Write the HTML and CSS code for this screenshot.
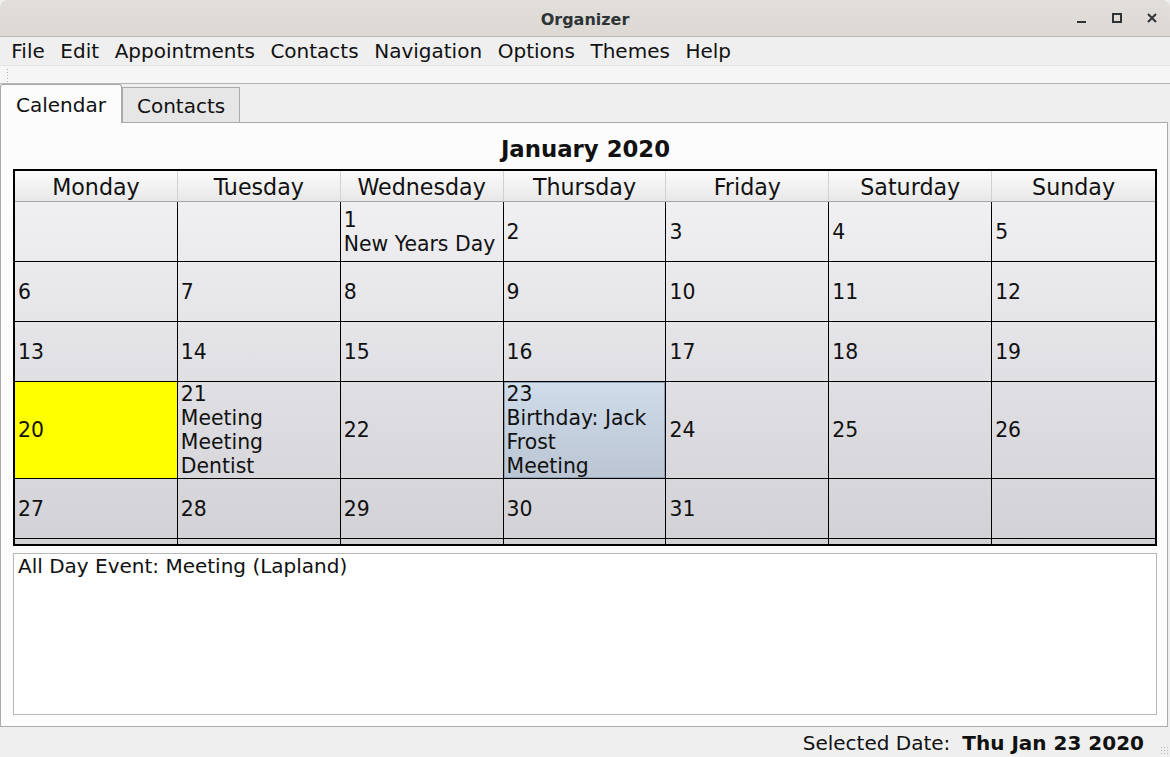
FILE: index.html
```html
<!DOCTYPE html>
<html>
<head>
<meta charset="utf-8">
<link rel="stylesheet" href="styles.css">
</head>
<body>
<div class="window">
  <div class="titlebar">
    <div class="title">Organizer</div>
    <div class="controls">
      <svg class="ctl" width="12" height="12" viewBox="0 0 12 12"><rect x="1" y="9" width="9" height="2" fill="#2e3436"/></svg>
      <svg class="ctl" width="12" height="12" viewBox="0 0 12 12"><rect x="2" y="2" width="8" height="8" fill="none" stroke="#2e3436" stroke-width="2"/></svg>
      <svg class="ctl" width="12" height="12" viewBox="0 0 12 12"><path d="M2 2 L10 10 M10 2 L2 10" stroke="#2e3436" stroke-width="2"/></svg>
    </div>
  </div>
  <div class="menubar">
    <span class="mi">File</span><span class="mi">Edit</span><span class="mi">Appointments</span><span class="mi">Contacts</span><span class="mi">Navigation</span><span class="mi">Options</span><span class="mi">Themes</span><span class="mi">Help</span>
  </div>
  <div class="toolbar"><div class="grip"></div></div>
  <div class="tabs">
    <div class="tab active">Calendar</div>
    <div class="tab">Contacts</div>
  </div>
  <div class="panel">
    <div class="heading">January 2020</div>
    <div class="cal">
      <div class="hd">Monday</div><div class="hd">Tuesday</div><div class="hd">Wednesday</div><div class="hd">Thursday</div><div class="hd">Friday</div><div class="hd">Saturday</div><div class="hd last">Sunday</div>

      <div class="c"></div><div class="c"></div><div class="c"><span>1</span><span>New Years Day</span></div><div class="c"><span>2</span></div><div class="c"><span>3</span></div><div class="c"><span>4</span></div><div class="c last"><span>5</span></div>

      <div class="c"><span>6</span></div><div class="c"><span>7</span></div><div class="c"><span>8</span></div><div class="c"><span>9</span></div><div class="c"><span>10</span></div><div class="c"><span>11</span></div><div class="c last"><span>12</span></div>

      <div class="c"><span>13</span></div><div class="c"><span>14</span></div><div class="c"><span>15</span></div><div class="c"><span>16</span></div><div class="c"><span>17</span></div><div class="c"><span>18</span></div><div class="c last"><span>19</span></div>

      <div class="c today"><span>20</span></div><div class="c"><span>21</span><span>Meeting</span><span>Meeting</span><span>Dentist</span></div><div class="c"><span>22</span></div><div class="c selected"><span>23</span><span>Birthday: Jack</span><span>Frost</span><span>Meeting</span></div><div class="c"><span>24</span></div><div class="c"><span>25</span></div><div class="c last"><span>26</span></div>

      <div class="c"><span>27</span></div><div class="c"><span>28</span></div><div class="c"><span>29</span></div><div class="c"><span>30</span></div><div class="c"><span>31</span></div><div class="c"></div><div class="c last"></div>

      <div class="c tail"></div><div class="c tail"></div><div class="c tail"></div><div class="c tail"></div><div class="c tail"></div><div class="c tail"></div><div class="c tail last"></div>
    </div>
    <div class="details">All Day Event: Meeting (Lapland)</div>
  </div>
  <div class="status">
    <span class="lbl">Selected Date:</span><span class="val">Thu Jan 23 2020</span>
    <div class="sgrip"></div>
  </div>
</div>
</body>
</html>
```

FILE: styles.css
```css
* { box-sizing: border-box; }
html, body {
  margin: 0;
  padding: 0;
  width: 1170px;
  height: 757px;
  overflow: hidden;
  background: #efefef;
  font-family: "DejaVu Sans", "Liberation Sans", sans-serif;
  font-size: 20px;
  color: #111;
}
.window {
  display: flex;
  flex-direction: column;
  width: 1170px;
  height: 757px;
}
.titlebar {
  height: 37px;
  flex: none;
  background: linear-gradient(#e2dfdb, #dcd8d3);
  border-bottom: 1px solid #bfb8b1;
  border-radius: 8px 8px 0 0;
  display: flex;
  align-items: center;
  justify-content: center;
  position: relative;
}
.title {
  font-size: 16px;
  font-weight: bold;
  color: #2e3436;
  padding-top: 2px;
}
.controls {
  position: absolute;
  right: 12px;
  top: 12px;
  display: flex;
  gap: 23px;
}
.ctl { display: block; }
.menubar {
  height: 28px;
  flex: none;
  display: flex;
  align-items: center;
  padding-left: 3.5px;
  background: #efefef;
}
.mi {
  padding: 0 7.8px;
  line-height: 28px;
}
.toolbar {
  height: 19px;
  flex: none;
  background: #f6f6f6;
  border-top: 1px solid #e4e4e4;
  border-bottom: 1px solid #b4b4b4;
  padding: 2px 0 0 6px;
}
.grip {
  width: 4px;
  height: 14px;
  background-image: radial-gradient(circle at 1.5px 1.5px, #b4b4b4 0.8px, transparent 1px);
  background-size: 3px 3px;
}
.tabs {
  height: 38px;
  flex: none;
  display: flex;
  align-items: flex-end;
  position: relative;
  z-index: 2;
}
.tab {
  height: 35px;
  padding: 0 14px;
  line-height: 36px;
  background: #e6e6e6;
  border: 1px solid #aaaaaa;
  border-bottom: none;
}
.tab.active {
  height: 39px;
  padding: 0 15px;
  line-height: 41px;
  background: #fcfcfc;
  border-radius: 3px 3px 0 0;
  margin-bottom: -1px;
}
.panel {
  flex: none;
  height: 605px;
  margin-right: 2px;
  background: #fcfcfc;
  border: 1px solid #aaaaaa;
  padding: 0 9px 0 12px;
  display: flex;
  flex-direction: column;
}
.heading {
  height: 46px;
  flex: none;
  padding-top: 13px;
  line-height: 26px;
  text-align: center;
  font-weight: bold;
  font-size: 22.8px;
}
.cal {
  width: 1144px;
  height: 377px;
  flex: none;
  border: 2px solid #000;
  display: grid;
  grid-template-columns: repeat(7, 1fr);
  grid-template-rows: 31px 60px 60px 60px 97px 60px 5px;
  background: linear-gradient(#efeff2 0px, #f0f0f3 31px, #d1d1d6 100%);
  overflow: hidden;
}
.hd {
  background: linear-gradient(#fbfbfb, #e8e8e8);
  border-right: 1px solid #d2d2d2;
  border-bottom: 1px solid #a6a6a6;
  text-align: center;
  line-height: 32px;
  font-size: 22.2px;
}
.c {
  border-right: 1px solid #000;
  border-bottom: 1px solid #000;
  display: flex;
  flex-direction: column;
  justify-content: center;
  padding: 0 0 0 3px;
  line-height: 24px;
  font-size: 20.4px;
  white-space: nowrap;
  overflow: hidden;
}
.hd.last, .c.last { border-right: none; }
.c.tail { border-bottom: none; }
.c.today { background: #ffff00; }
.c.selected {
  background: linear-gradient(#cfdce9, #bbc5d3);
  box-shadow: inset 0 0 0 1px #8fa3b9;
}
.details {
  width: 1144px;
  height: 162px;
  flex: none;
  margin-top: 7px;
  background: #fff;
  border: 1px solid #b8b8b8;
  padding: 0 4px;
  line-height: 24px;
}
.status {
  flex: 1;
  display: flex;
  align-items: center;
  justify-content: flex-end;
  padding: 2px 26px 0 0;
  position: relative;
}
.lbl { margin-right: 12px; }
.val { font-weight: bold; }
.sgrip {
  position: absolute;
  right: 2px;
  bottom: 1px;
  width: 8px;
  height: 10px;
  background-image: radial-gradient(circle at 1.5px 1.5px, #b4b4b4 0.8px, transparent 1px);
  background-size: 3px 3px;
}
```
